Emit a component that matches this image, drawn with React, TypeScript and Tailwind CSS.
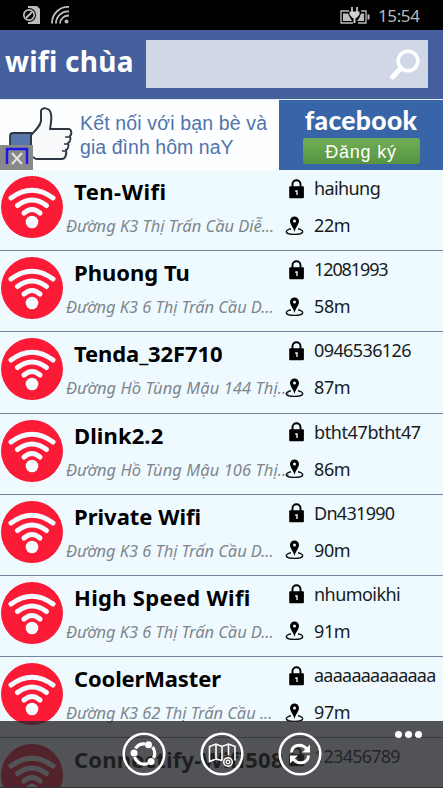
import React from 'react';

const networks = [
    { name: 'Ten-Wifi', address: 'Đường K3 Thị Trấn Cầu Diễ...', password: 'haihung', distance: '22m', nameClass: 'tracking-[0.500px]', passClass: 'tracking-[-0.600px]', addressClass: 'tracking-[-0.030px]' },
    { name: 'Phuong Tu', address: 'Đường K3 6 Thị Trấn Cầu D...', password: '12081993', distance: '58m', nameClass: 'tracking-normal', passClass: 'tracking-[-1.100px]', addressClass: 'tracking-[-0.060px]' },
    { name: 'Tenda_32F710', address: 'Đường Hồ Tùng Mậu 144 Thị...', password: '0946536126', distance: '87m', nameClass: 'tracking-[-0.100px]', passClass: 'tracking-[-0.600px]', addressClass: 'tracking-[0.070px]' },
    { name: 'Dlink2.2', address: 'Đường Hồ Tùng Mậu 106 Thị...', password: 'btht47btht47', distance: '86m', nameClass: 'tracking-[0.100px]', passClass: 'tracking-[-0.400px]', addressClass: 'tracking-[0.070px]' },
    { name: 'Private Wifi', address: 'Đường K3 6 Thị Trấn Cầu D...', password: 'Dn431990', distance: '90m', nameClass: 'tracking-normal', passClass: 'tracking-[-0.700px]', addressClass: 'tracking-[-0.060px]' },
    { name: 'High Speed Wifi', address: 'Đường K3 6 Thị Trấn Cầu D...', password: 'nhumoikhi', distance: '91m', nameClass: 'tracking-[0.300px]', passClass: 'tracking-[-0.550px]', addressClass: 'tracking-[-0.060px]' },
    { name: 'CoolerMaster', address: 'Đường K3 62 Thị Trấn Cầu ...', password: 'aaaaaaaaaaaaa', distance: '97m', nameClass: 'tracking-[-0.150px]', passClass: 'tracking-[-0.750px]', addressClass: 'tracking-[-0.060px]' },
    { name: 'Connectify-Wifi508', address: '', password: '123456789', distance: '', nameClass: 'tracking-[0.200px]', passClass: 'tracking-[-0.750px]', addressClass: 'tracking-normal' },
];

const WifiBadge = () => (
    <svg className="w-[62px] h-[62px] shrink-0" viewBox="0 0 62 62" fill="none">
        <circle cx="31" cy="31" r="31" fill="#fb1b36" />
        <g stroke="#f5fbff" strokeWidth="5" strokeLinecap="round">
            <path d="M10 22Q31 6.500 52 22" />
            <path d="M16.500 29.500Q31 18.500 45.500 29.500" />
            <path d="M23 37Q31 30 39 37" />
        </g>
        <circle cx="31" cy="46" r="6.300" fill="#f5fbff" />
    </svg>
);

const LockIcon = () => (
    <svg className="w-4 h-5" viewBox="0 0 16 20" fill="none">
        <path d="M3.500 9V5.300a4 4 0 0 1 8 0V9" stroke="#000" strokeWidth="1.900" />
        <rect x="0.200" y="7.200" width="14.700" height="12" rx="1" fill="#000" />
        <path d="M6.300 11.300h2.400v4.700h-1.400v-3h-1z" fill="#e4edf2" />
    </svg>
);

const PinIcon = () => (
    <svg className="w-5 h-5" viewBox="0 0 20 20" fill="none">
        <path d="M6 12.800C-1 14.200-.5 18.400 9.500 18.400S20 14.200 13 12.800" stroke="#111" strokeWidth="1.400" />
        <path d="M9.500 16C8.700 11.500 5 8.500 5 5a4.500 4.500 0 0 1 9 0C14 8.500 10.300 11.500 9.500 16z" fill="#000" />
        <circle cx="9.500" cy="4.900" r="1.500" fill="#f0f8ff" />
    </svg>
);

const StatusBar = () => (
    <div className="h-[30px] bg-black flex items-center pl-[22px] pr-[23px] text-[#b9b9b9]">
        <svg className="w-[19px] h-5" viewBox="0 0 19 20" fill="none">
            <path d="M6 1h9l3 3v15H6z" fill="#bdbdbd" />
            <circle cx="7" cy="10" r="7" fill="#000" />
            <circle cx="7" cy="10" r="5.200" stroke="#bdbdbd" strokeWidth="1.700" />
            <path d="M4 13l6-6" stroke="#bdbdbd" strokeWidth="2" />
        </svg>
        <svg className="w-[19px] h-5 ml-[10px]" viewBox="0 0 19 20" fill="none" stroke="#bdbdbd" strokeWidth="1.800">
            <path d="M1 18.500A16 16 0 0 1 18 2M5 18.500A12 12 0 0 1 18 6.500M9 18.500A8.500 8.500 0 0 1 18 10.500" />
            <circle cx="15.500" cy="16.500" r="2" fill="#bdbdbd" stroke="none" />
        </svg>
        <svg className="w-[30px] h-[19px] ml-auto" viewBox="0 0 30 19" fill="none">
            <path d="M9 5H1v12h12M18 17h8V5h-5" stroke="#bdbdbd" strokeWidth="1.300" />
            <path d="M3 7.500h5l2 4 2 3.500H3zM19 12.500l2-5h3V15h-7z" fill="#bdbdbd" />
            <path d="M12 1v5M17 1v5" stroke="#d0d0d0" strokeWidth="1.700" />
            <path d="M9.500 5.500h10v3l-3 3.500h-1V17h-2v-5h-1l-3-3.500z" fill="#d0d0d0" />
            <path d="M28.500 8.500v5" stroke="#bdbdbd" strokeWidth="2" />
        </svg>
        <span className="ml-2 w-[42px] pt-0.5 whitespace-nowrap text-[17px] leading-5 tracking-[-0.400px]">15:54</span>
    </div>
);

const Header = () => (
    <header className="h-[69px] bg-[#455f9c] flex pt-[10px] pl-[5px] pr-[15px]">
        <h1 className="w-[141px] shrink-0 whitespace-nowrap text-[28px] leading-[42px] font-bold text-white tracking-[0.250px]">wifi chùa</h1>
        <div className="h-[48px] flex-1 bg-[#d0d8e8] flex items-center justify-end pr-[7px]">
            <svg className="w-[33px] h-[33px]" viewBox="0 0 33 33" fill="none" stroke="#fff">
                <circle cx="20" cy="13" r="9.800" strokeWidth="3.500" />
                <path d="M13 20L4.500 29" strokeWidth="5" strokeLinecap="round" />
            </svg>
        </div>
    </header>
);

const AdBanner = () => (
    <div className="h-[71px] bg-[#fdfeff] flex border-t border-[#e5edf8]">
        <div className="relative w-20 shrink-0">
            <svg className="w-20 h-[70px]" viewBox="0 0 80 70" fill="none">
                <path d="M10 36q0-3 3-3h18v29H10z" fill="#5876a9" stroke="#303744" strokeWidth="1.800" />
                <path
                    d="M32 34c5-5 8-8 9-13V11c0-4 9-4 10 3 1 5 0 9-1 15h19c3 1 3 5 1 7 1 3 0 6-2 7 1 3 0 6-2 7 1 5-1 9-4 9H36l-5-3V35z"
                    fill="#f8f9fb"
                    stroke="#303744"
                    strokeWidth="2"
                    strokeLinejoin="round"
                />
                <path d="M65 37h5M64 44h4M62 51h4" stroke="#303744" strokeWidth="1.300" />
            </svg>
            <svg className="absolute left-0 bottom-0 w-[33px] h-[25px]" viewBox="0 0 33 25" fill="none">
                <path d="M0 0h33v25H0z" fill="#898989" />
                <path d="M7 19V4h20v15" stroke="#1c16e8" strokeWidth="2.500" />
                <path d="M12 8l10 11M22 8L12 19" stroke="#e4e4e4" strokeWidth="2" />
            </svg>
        </div>
        <p className="w-[199px] shrink-0 pt-[11px] whitespace-nowrap font-['Liberation_Sans',sans-serif] text-[19.500px] leading-6 text-[#4f74ab]">
            <span className="block tracking-[0.150px]">Kết nối với bạn bè và</span>
            <span className="block tracking-[0.050px]">gia đình hôm naY</span>
        </p>
        <div className="flex-1 bg-[#3765a7] flex flex-col items-center">
            <span className="h-[38px] whitespace-nowrap font-['Lato',sans-serif] font-black text-[26.500px] leading-[41px] tracking-[0.300px] text-white">facebook</span>
            <span className="w-[117px] h-[26px] rounded-[3px] bg-linear-to-b from-[#72ae57] to-[#569440] text-center whitespace-nowrap font-['Liberation_Sans',sans-serif] text-[18px] leading-[28px] tracking-[0.800px] text-white">
                Đăng ký
            </span>
        </div>
    </div>
);

type Network = (typeof networks)[number];

const NetworkRow = ({ network }: { network: Network }) => (
    <li className="h-[81.200px] shrink-0 flex border-b border-[#75829b] pl-[1px] pt-[5px]">
        <div className="pt-[1px]"><WifiBadge /></div>
        <div className="w-[222px] shrink-0 pl-[3px] whitespace-nowrap">
            <div className={`pl-2 text-[22px] leading-[32px] font-bold text-black ${network.nameClass}`}>{network.name}</div>
            <div className={`text-[16.500px] leading-[37px] italic text-[#80868d] ${network.addressClass}`}>{network.address}</div>
        </div>
        <div className="flex flex-col whitespace-nowrap text-[18px] text-[#181c20]">
            <div className="h-[27px] flex items-center">
                <span className="w-[29px] pl-1"><LockIcon /></span>
                <span className={network.passClass}>{network.password}</span>
            </div>
            {network.distance && (
                <div className="h-[47px] flex items-center">
                    <span className="w-[29px]"><PinIcon /></span>
                    <span className="tracking-[-0.400px]">{network.distance}</span>
                </div>
            )}
        </div>
    </li>
);

const ShareIcon = () => (
    <>
        <path d="M10.500 13.500A10 10 0 0 1 20 9M27.500 12A10.500 10.500 0 0 1 28.500 23M23 28.500A10.500 10.500 0 0 1 9.500 22" strokeWidth="3.200" />
        <g fill="#fff" stroke="none">
            <circle cx="23.500" cy="9.800" r="3.500" />
            <circle cx="9" cy="18" r="3.500" />
            <circle cx="26" cy="26.500" r="3.500" />
        </g>
    </>
);

const MapIcon = () => (
    <>
        <path d="M19 25.500l-6-1.500-6.500 2.500v-15l6.500-2.500 6 2.500 6.500-2.500 6.500 2.500v14M13 9v15M19 11.500v14M25.500 9v11" strokeWidth="1.600" />
        <circle cx="25" cy="27" r="4.300" fill="#505154" strokeWidth="1.500" />
        <circle cx="25" cy="27" r="1.800" strokeWidth="1.200" />
    </>
);

const RefreshIcon = () => (
    <>
        <path d="M10.500 17.500C11 9.500 20.500 8 25.500 13.500M27.500 20.500C27 28.500 17.500 30 12.500 24.500" strokeWidth="3" />
        <path d="M29 9.500v8h-8zM9 28.500v-8h8z" fill="#fff" stroke="none" />
    </>
);

const BarButton = ({ label, children }: { label: string; children: React.ReactNode }) => (
    <button aria-label={label} className="w-11 h-11">
        <svg className="w-11 h-11" viewBox="-3 -3 44 44" fill="none" stroke="#fff">
            <circle cx="19" cy="19" r="20.300" strokeWidth="2.500" />
            {children}
        </svg>
    </button>
);

const AppBar = () => (
    <nav className="absolute left-0 bottom-0 w-full h-[67px] bg-[#262629]/79 border-b border-[#303133] flex justify-center gap-[34px] pt-[11px]">
        <BarButton label="Share"><ShareIcon /></BarButton>
        <BarButton label="Map"><MapIcon /></BarButton>
        <BarButton label="Refresh"><RefreshIcon /></BarButton>
        <div className="absolute right-[21px] top-[10px] flex gap-[3px]">
            <span className="w-[7px] h-[7px] rounded-full bg-white" />
            <span className="w-[7px] h-[7px] rounded-full bg-white" />
            <span className="w-[7px] h-[7px] rounded-full bg-white" />
        </div>
    </nav>
);

const App = () => {
    return (
        <div className="relative w-[443px] h-[788px] overflow-hidden bg-[#effaff] font-['Noto_Sans',sans-serif]">
            <StatusBar />
            <Header />
            <AdBanner />
            <ul className="flex flex-col">
                {networks.map((network) => (
                    <NetworkRow key={network.name} network={network} />
                ))}
            </ul>
            <AppBar />
        </div>
    );
};

export default App;
